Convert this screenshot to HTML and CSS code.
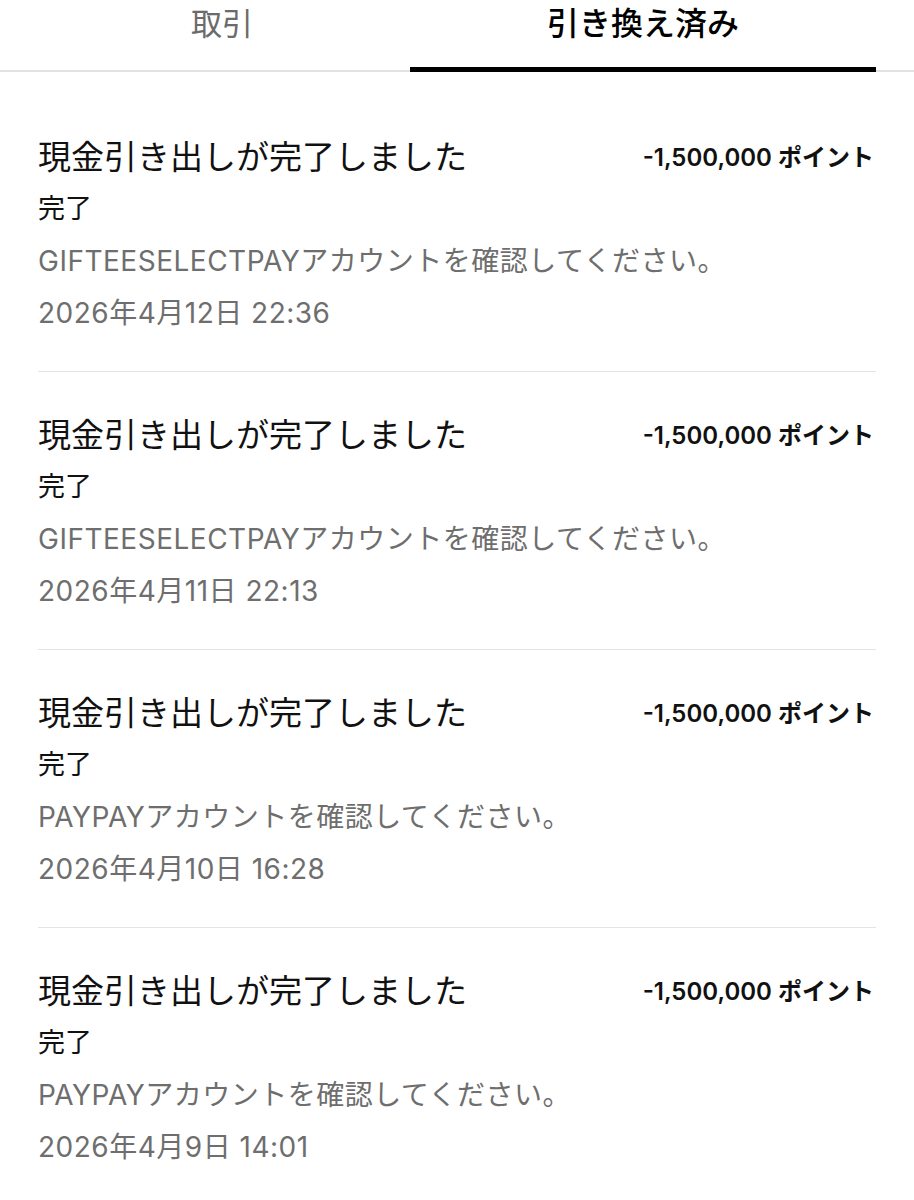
FILE: index.html
```html
<!DOCTYPE html>
<html lang="ja">

<head>
    <meta charset="UTF-8">
    <meta name="viewport" content="width=device-width, initial-scale=1.0">
    <title>引き換え済み</title>

    <link rel="stylesheet" href="styles.css">
</head>

<body>
    <div class="tabs">
        <span class="tab">取引</span>
        <span class="tab active">引き換え済み</span>
    </div>

    <div class="records">
        <div class="record">
            <div class="record-head">
                <span class="record-title">現金引き出しが完了しました</span>
                <span class="record-amount">-1,500,000 ポイント</span>
            </div>
            <div class="record-status">完了</div>
            <div class="record-note">GIFTEESELECTPAYアカウントを確認してください。</div>
            <div class="record-date">2026年4月12日 22:36</div>
        </div>

        <div class="record">
            <div class="record-head">
                <span class="record-title">現金引き出しが完了しました</span>
                <span class="record-amount">-1,500,000 ポイント</span>
            </div>
            <div class="record-status">完了</div>
            <div class="record-note">GIFTEESELECTPAYアカウントを確認してください。</div>
            <div class="record-date">2026年4月11日 22:13</div>
        </div>

        <div class="record">
            <div class="record-head">
                <span class="record-title">現金引き出しが完了しました</span>
                <span class="record-amount">-1,500,000 ポイント</span>
            </div>
            <div class="record-status">完了</div>
            <div class="record-note">PAYPAYアカウントを確認してください。</div>
            <div class="record-date">2026年4月10日 16:28</div>
        </div>

        <div class="record">
            <div class="record-head">
                <span class="record-title">現金引き出しが完了しました</span>
                <span class="record-amount">-1,500,000 ポイント</span>
            </div>
            <div class="record-status">完了</div>
            <div class="record-note">PAYPAYアカウントを確認してください。</div>
            <div class="record-date">2026年4月9日 14:01</div>
        </div>
    </div>
</body>

</html>
```

FILE: styles.css
```css
body {
    margin: 0;
    background: #fff;
    color: #111;
    font-family: Inter, "Noto Sans CJK JP", sans-serif;
}

/* Tabs */
.tabs {
    display: flex;
    height: 72px;
    border-bottom: 2px solid #e2e2e2;
    box-sizing: border-box;
}

.tab {
    flex: 0 0 410px;
    padding-left: 34px;
    box-sizing: border-box;
    text-align: center;
    font-size: 31px;
    line-height: 48px;
    color: #6b6b6b;
}

.tab.active {
    flex: 0 0 466px;
    padding-left: 0;
    color: #000;
    font-size: 32px;
    font-weight: 500;
    border-bottom: 5px solid #000;
    height: 72px;
}

/* Records list */
.records {
    padding: 22px 38px 0;
}

.record {
    padding: 33px 0 32px;
    border-bottom: 1px solid #e4e4e4;
}

.record-head {
    display: flex;
    justify-content: space-between;
    align-items: center;
    height: 56px;
}

.record-title {
    font-size: 33px;
    color: #111;
}

.record-amount {
    font-size: 24px;
    font-weight: 600;
    color: #111;
    margin-right: 2px;
}

.record-status,
.record-note,
.record-date {
    font-size: 28px;
    line-height: 52px;
    letter-spacing: 0.5px;
}

.record-status {
    font-size: 27px;
    letter-spacing: 0;
    color: #111;
}

.record-note,
.record-date {
    color: #6e6e6e;
}
```
